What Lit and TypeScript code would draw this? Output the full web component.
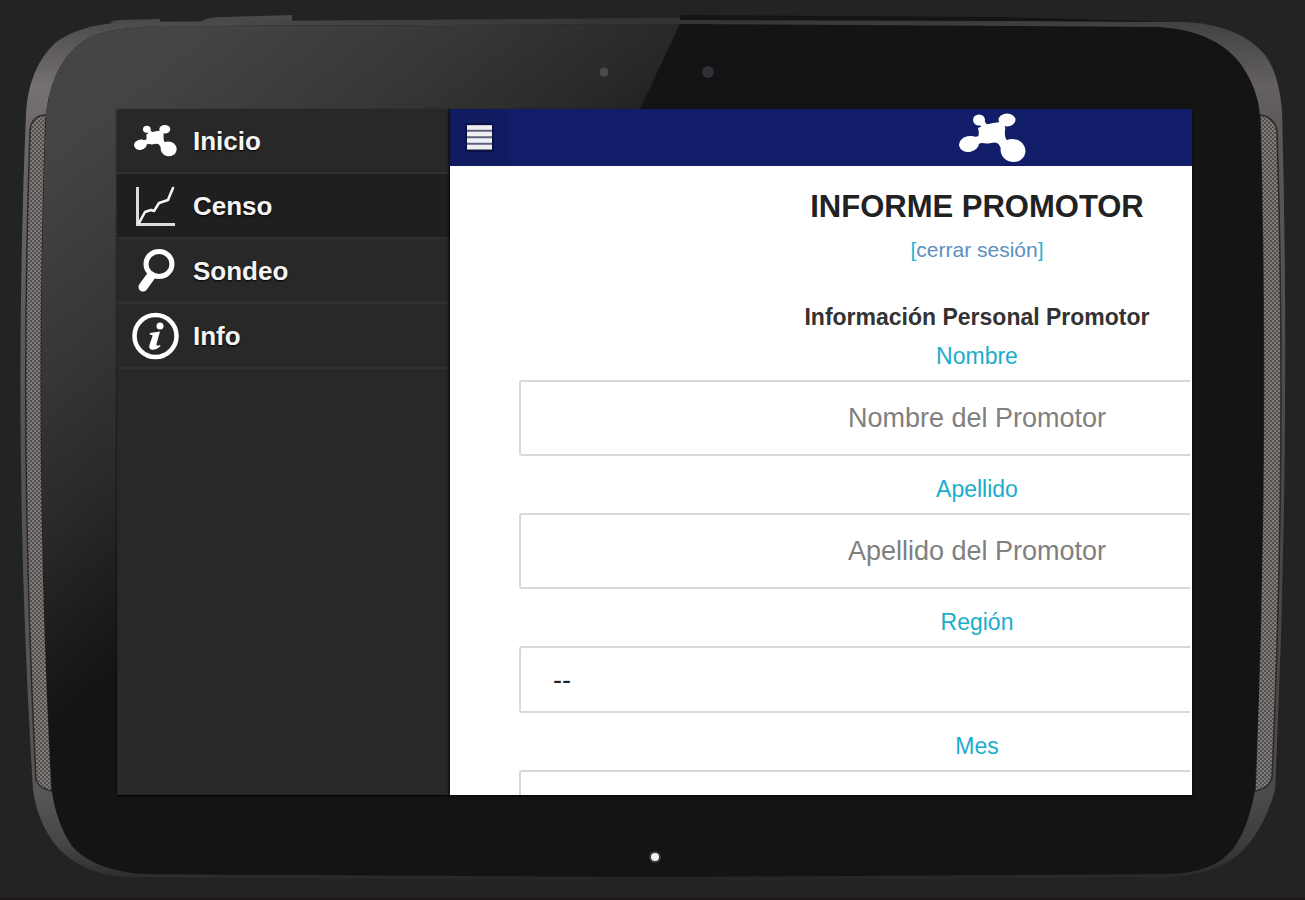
import { LitElement, html, css, svg } from "lit";
import { customElement, property } from "lit/decorators.js";

const molecule = svg`
  <g fill="#fff" stroke="#fff">
    <path d="M19 16 Q26 12 34 11 L42 10 Q47 12 46 19 Q45 25 49 30 L42 34 Q38 29 32 31 Q24 33 18 28 Q21 22 19 16Z" stroke="none" />
    <path d="M20 7 L27 16 M49 7 L40 15" stroke-width="6" fill="none" />
    <path d="M12 24 Q18 26 22 23 L23 31 Q18 31 14 39Z M42 25 Q46 31 56 28 L44 44 Q43 36 38 30Z" stroke="none" />
    <ellipse cx="20" cy="8" rx="6" ry="5.500" stroke="none" />
    <ellipse cx="48" cy="8" rx="8.500" ry="6.500" stroke="none" />
    <ellipse cx="10" cy="32" rx="10" ry="8" stroke="none" transform="rotate(-12 10 32)" />
    <ellipse cx="54" cy="38.500" rx="12.500" ry="11.500" stroke="none" transform="rotate(15 54 38.500)" />
  </g>`;

const icons: Record<string, unknown> = {
  inicio: html`<svg viewBox="0 0 67 51" width="43" height="33" aria-hidden="true">${molecule}</svg>`,
  censo: html`<svg viewBox="0 0 42 42" width="42" height="42" aria-hidden="true">
    <path d="M3.500 2V39.500H41" fill="none" stroke="#ddd" stroke-width="3" />
    <path d="M5 38L11 27L17 25L20 26L25 18L34 15L36 10L39 3" fill="none" stroke="#f4f4f4" stroke-width="2.600" stroke-linejoin="round" stroke-linecap="round" />
  </svg>`,
  sondeo: html`<svg viewBox="0 0 42 46" width="42" height="46" aria-hidden="true">
    <ellipse cx="25" cy="16" rx="13" ry="12.500" fill="none" stroke="#fff" stroke-width="5" />
    <path d="M17 28L9 39" stroke="#fff" stroke-width="9" stroke-linecap="round" />
  </svg>`,
  info: html`<svg viewBox="0 0 48 48" width="48" height="48" aria-hidden="true">
    <circle cx="24.500" cy="24" r="21" fill="none" stroke="#fff" stroke-width="4.500" />
    <circle cx="29" cy="14" r="3.500" fill="#fff" />
    <path d="M19 21L29 19.500L25.500 32Q25 35 29 33L29.500 34Q24 39 20 37.500Q17.500 36 18.500 33L21.500 24Q21.500 22.500 18.500 22.500Z" fill="#fff" />
  </svg>`,
};

@customElement("tablet-shell")
export class TabletShell extends LitElement {
  static styles = css`
    :host {
      display: block;
    }
    .art {
      display: block;
      width: 100%;
      height: 100%;
    }
  `;

  render() {
    return html`<svg class="art" viewBox="0 0 1305 900" preserveAspectRatio="none" aria-hidden="true">
      <defs>
        <linearGradient id="rim" x1="0" y1="0" x2="0" y2="1">
          <stop offset="0" stop-color="#4a4848" />
          <stop offset="0.08" stop-color="#777272" />
          <stop offset="0.13" stop-color="#6c6868" />
          <stop offset="0.5" stop-color="#565352" />
          <stop offset="0.9" stop-color="#585555" />
          <stop offset="0.96" stop-color="#454545" />
          <stop offset="1" stop-color="#2a2b2b" />
        </linearGradient>
        <linearGradient id="rimShade" x1="0" y1="0" x2="1" y2="0">
          <stop offset="0.12" stop-color="#1b1c1c" stop-opacity="0" />
          <stop offset="0.5" stop-color="#1b1c1c" stop-opacity="0.5" />
          <stop offset="0.9" stop-color="#1b1c1c" stop-opacity="0.2" />
        </linearGradient>
        <linearGradient id="glare" gradientUnits="userSpaceOnUse" x1="150" y1="60" x2="530" y2="530">
          <stop offset="0" stop-color="#454545" />
          <stop offset="0.3" stop-color="#363636" />
          <stop offset="0.5" stop-color="#292929" />
          <stop offset="0.75" stop-color="#141414" />
        </linearGradient>
        <pattern id="mesh" width="4" height="4" patternUnits="userSpaceOnUse">
          <rect width="4" height="4" fill="#524f4e" />
          <circle cx="1" cy="1" r="0.900" fill="#94908d" />
          <circle cx="3" cy="3" r="0.900" fill="#94908d" />
        </pattern>
        <clipPath id="faceClip">
          <path d="M46 112Q54 55 92 36Q112 28 160 26L680 24L1160 27Q1215 31 1240 63Q1258 88 1260 116Q1269 460 1255 790Q1248 830 1232 850Q1214 872 1170 874L655 877L140 874Q92 869 72 846Q56 822 52 790Q34 450 46 112Z" />
        </clipPath>
      </defs>
      <rect width="1305" height="900" fill="#222424" />
      <rect y="897" width="1305" height="3" fill="#1f181b" />
      <path d="M110 23Q112 20 120 20L160 19V24ZM202 22Q204 17 225 17L292 15V22Z" fill="#4a4949" />
      <path d="M26 112Q29 68 55 43Q78 25 125 22L680 18L1185 22Q1240 25 1265 55Q1279 74 1282 112Q1291 450 1275 790Q1264 830 1240 853Q1216 874 1170 877L655 880L125 877Q84 874 60 850Q38 826 33 790Q12 450 26 112Z" fill="url(#rim)" />
      <path d="M26 112Q29 68 55 43Q78 25 125 22L680 18L1185 22Q1240 25 1265 55Q1279 74 1282 112Q1291 450 1275 790Q1264 830 1240 853Q1216 874 1170 877L655 880L125 877Q84 874 60 850Q38 826 33 790Q12 450 26 112Z" fill="url(#rimShade)" />
      <path d="M681 15L1000 17L1180 22L1000 21L680 20Z" fill="#141414" />
      <g fill="url(#mesh)" stroke="#2b2929" stroke-width="1.500">
        <path d="M46 115Q32 115 30 130Q19 450 36 780Q40 789 52 791Q34 450 46 115Z" />
        <path d="M1260 115Q1274 117 1277 130Q1287 450 1272 778Q1268 789 1255 791Q1269 450 1260 115Z" />
      </g>
      <g clip-path="url(#faceClip)">
        <rect width="1305" height="900" fill="#141414" />
        <path d="M0 0H691L640 109L420 570L300 900H0Z" fill="url(#glare)" />
      </g>
      <circle cx="604" cy="72" r="4.500" fill="#4a4a4a" />
      <circle cx="708" cy="72" r="6" fill="#303036" />
      <circle cx="655" cy="857" r="6" fill="#555" opacity="0.6" />
      <circle cx="655" cy="857" r="4" fill="#f4f4f4" />
    </svg>`;
  }
}

@customElement("side-menu")
export class SideMenu extends LitElement {
  @property() active = "censo";

  static styles = css`
    :host {
      display: block;
      background: #282828;
    }
    .item {
      display: flex;
      align-items: center;
      gap: 14px;
      box-sizing: border-box;
      height: 65px;
      padding-left: 14px;
      border-bottom: 2px solid #303030;
      color: #f5f5f5;
      font-size: 26px;
      font-weight: 700;
      line-height: 32px;
      text-decoration: none;
      text-shadow: 0 1px 2px #000;
    }
    .item.active {
      background: #1f1f1f;
    }
    .icon {
      display: grid;
      place-items: center;
      width: 48px;
      height: 48px;
    }
  `;

  render() {
    const items = [
      ["inicio", "Inicio"],
      ["censo", "Censo"],
      ["sondeo", "Sondeo"],
      ["info", "Info"],
    ];
    return html`<nav>
      ${items.map(
        ([id, label]) => html`<a class="item ${id === this.active ? "active" : ""}" href="#${id}">
          <span class="icon">${icons[id]}</span>${label}
        </a>`,
      )}
    </nav>`;
  }
}

@customElement("app-root")
export class AppRoot extends LitElement {
  static styles = css`
    :host {
      display: grid;
      min-height: 100vh;
      font-family: "Liberation Sans", Arial, sans-serif;
    }
    .shell,
    .screen {
      grid-area: 1 / 1;
    }
    .screen {
      z-index: 1;
      display: flex;
      height: calc(100vh - 214px);
      margin: 109px 113px 105px 117px;
      overflow: hidden;
      box-shadow: 0 1px 2px #000;
    }
    .menu {
      flex: none;
      width: 333px;
    }
    .page {
      flex: 1;
      min-width: 0;
      overflow: hidden;
      background: #fff;
      box-shadow: 0 0 3px 1px #000;
    }
    .bar {
      display: flex;
      align-items: center;
      height: 57px;
      background: #111d68;
    }
    .toggle {
      display: grid;
      place-items: center;
      width: 59px;
      height: 57px;
      padding: 0;
      border: 0;
      background: #101b62;
    }
    .brand {
      flex: 1;
      display: flex;
      justify-content: center;
      padding-left: 283px;
    }
    .view {
      margin-right: 2px;
      overflow: hidden;
    }
    .content {
      display: flex;
      flex-direction: column;
      box-sizing: border-box;
      width: calc(100% + 314px);
      padding: 20px 69px;
      text-align: center;
    }
    .title {
      margin: 0;
      color: #222;
      font-size: 31px;
      line-height: 42px;
    }
    .session {
      margin: 0 0 29px;
      color: #1fb5d6;
      font-size: 21px;
      line-height: 44px;
    }
    .link {
      color: #5b8fc0;
      text-decoration: none;
    }
    .subtitle {
      margin: 0;
      color: #333;
      font-size: 23px;
      line-height: 32px;
    }
    .label {
      color: #1aadcb;
      font-size: 23px;
      line-height: 47px;
    }
    .field {
      box-sizing: border-box;
      width: 100%;
      height: 76px;
      margin: 0 0 10px;
      padding: 0 32px;
      border: 2px solid #d9d9d9;
      border-radius: 3px;
      background: #fff;
      color: #222;
      font-family: inherit;
      font-size: 27px;
      text-align: center;
    }
    .field::placeholder {
      color: #808080;
      opacity: 1;
    }
    .field.pick {
      height: 67px;
      appearance: none;
      text-align: left;
    }
  `;

  render() {
    return html`
      <tablet-shell class="shell"></tablet-shell>
      <div class="screen">
        <side-menu class="menu"></side-menu>
        <main class="page">
          <header class="bar">
            <button class="toggle" type="button" aria-label="Menú">
              <svg width="29" height="29" viewBox="0 0 29 29" aria-hidden="true">
                <rect width="29" height="29" fill="#0b1142" />
                <rect x="2" y="2" width="25" height="25" fill="#5c6080" />
                <path d="M2 4.500H27M2 11H27M2 17.500H27M2 24H27" stroke="#f0f0f4" stroke-width="4.500" />
              </svg>
            </button>
            <div class="brand">
              <svg viewBox="0 0 67 51" width="67" height="51" aria-hidden="true">${molecule}</svg>
            </div>
          </header>
          <div class="view">
            <form class="content">
              <h1 class="title">INFORME PROMOTOR</h1>
              <p class="session">[<a class="link" href="#salir">cerrar sesión</a>]</p>
              <h2 class="subtitle">Información Personal Promotor</h2>
              <label class="label" for="nombre">Nombre</label>
              <input class="field" id="nombre" type="text" placeholder="Nombre del Promotor" />
              <label class="label" for="apellido">Apellido</label>
              <input class="field" id="apellido" type="text" placeholder="Apellido del Promotor" />
              <label class="label" for="region">Región</label>
              <select class="field pick" id="region"><option>--</option></select>
              <label class="label" for="mes">Mes</label>
              <select class="field pick" id="mes"><option></option></select>
            </form>
          </div>
        </main>
      </div>
    `;
  }
}
